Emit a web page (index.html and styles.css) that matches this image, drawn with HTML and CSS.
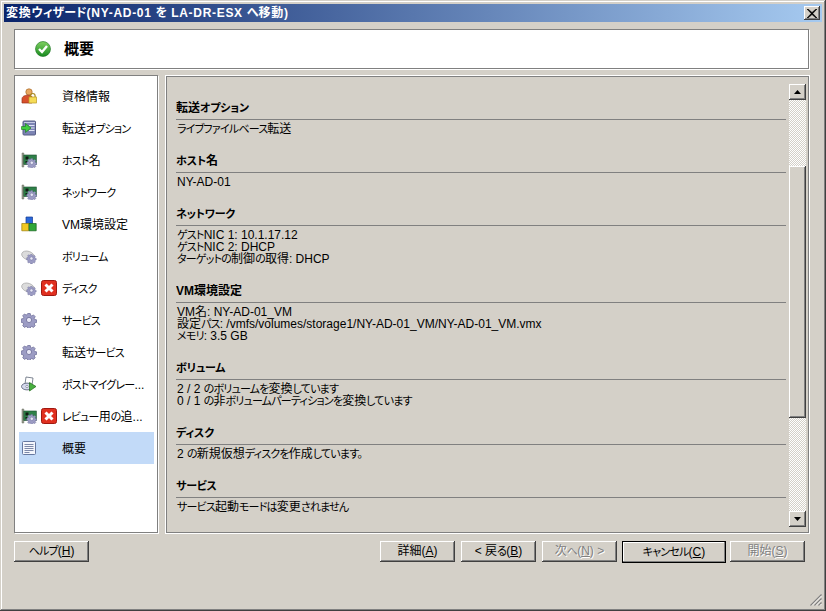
FILE: index.html
```html
<!DOCTYPE html>
<html lang="ja">
<head>
<meta charset="utf-8">
<title>変換ウィザード</title>
<link rel="stylesheet" href="styles.css">
</head>
<body>
<svg class="sprites" width="0" height="0">
  <defs>
    <linearGradient id="gGreen" x1="0" y1="0" x2="0" y2="1"><stop offset="0" stop-color="#7fd060"/><stop offset="1" stop-color="#188a20"/></linearGradient>
    <g id="gear">
      <path fill="#9c9cc4" stroke="#6a6a96" stroke-width=".8" d="M6.600 1h2.800l.4 2 1.300.6 1.800-1.100 1.900 1.900-1.100 1.800.6 1.300 2 .4v2.800l-2 .4-.6 1.300 1.100 1.800-1.900 1.900-1.800-1.100-1.300.6-.4 2H6.600l-.4-2-1.300-.6-1.800 1.100-1.900-1.900 1.100-1.800-.6-1.300-2-.4V6.900l2-.4.6-1.300-1.100-1.800 1.900-1.900 1.800 1.100 1.300-.6z" transform="translate(.6 .6) scale(.92)"/>
      <circle cx="8" cy="8" r="2.600" fill="#e8e8f6" stroke="#6a6a96" stroke-width=".8"/>
    </g>
    <g id="user">
      <circle cx="8" cy="4" r="3.200" fill="#e8a860" stroke="#a86a28" stroke-width=".7"/>
      <path d="M1 15V11c0-2.500 2.500-3.800 6-3.800s4 1 4 3V15z" fill="#d8502c" stroke="#983018" stroke-width=".7"/>
      <path d="M9.500 9V7.800a2.300 2.300 0 0 1 4.600 0V9" fill="none" stroke="#a88820" stroke-width="1.200"/>
      <rect x="8" y="9" width="7.500" height="6" fill="#f6dc58" stroke="#b89820" stroke-width=".7"/>
    </g>
    <g id="transfer">
      <rect x="2" y="1" width="12.500" height="14" rx="1" fill="#7c84b4" stroke="#565c84"/>
      <path d="M3 2.500h11" stroke="#c8cce6"/>
      <path d="M8 5.500h5.500M9.500 8h4M8 10.500h5.500" stroke="#e0e4f4"/>
      <path d="M.5 6.500h4V3.500L10 8l-5.500 4.500V9.500h-4z" fill="#40cc40" stroke="#187818" stroke-width=".6"/>
    </g>
    <g id="nic">
      <path d="M1 1h1.800v14H1z" fill="#9aa090" stroke="#60645a" stroke-width=".5"/>
      <rect x="2.800" y="3" width="12.500" height="9.500" fill="#2e8048" stroke="#1a4c2c" stroke-width=".6"/>
      <path d="M4.500 4.500h3v3h-3zM4.500 9h1.500v2H4.500z" fill="#101c14"/>
      <use href="#gear" transform="translate(5.600 5.600) scale(.65)"/>
    </g>
    <g id="vm">
      <path d="M5 1h6.500v6.500H5z" fill="#2a68d8" stroke="#143a90" stroke-width=".7"/>
      <path d="M.8 7.500h7v7.300h-7z" fill="#f0c820" stroke="#987c10" stroke-width=".7"/>
      <path d="M8 7.500h7.200v7.300H8z" fill="#30a838" stroke="#186020" stroke-width=".7"/>
    </g>
    <g id="volume">
      <ellipse cx="7" cy="7.500" rx="6.500" ry="4.200" fill="#dcdcdc" stroke="#b0b0b0" stroke-width=".8" transform="rotate(18 7 7.500)"/>
      <use href="#gear" transform="translate(5.500 5.500) scale(.62)"/>
    </g>
    <g id="post">
      <path d="M5 1l7 1-1 7-7-1z" fill="#fff" stroke="#606878" stroke-width=".8"/>
      <ellipse cx="6" cy="10.500" rx="5.500" ry="3.400" fill="#d4d8ec" stroke="#505870" stroke-width=".8"/>
      <circle cx="6" cy="10.500" r="1.200" fill="#fff" stroke="#505870" stroke-width=".5"/>
      <path d="M8.500 6.500l6.500 4-6.500 4.500z" fill="#48b040" stroke="#206818" stroke-width=".7"/>
    </g>
    <g id="doc">
      <rect x="1.500" y="1.500" width="13" height="13" rx="1" fill="#f4f6fc" stroke="#6678a0"/>
      <path d="M3.500 4.500h9M3.500 6.500h9M3.500 8.500h9M3.500 10.500h9M3.500 12.500h5" stroke="#7c88a8"/>
    </g>
    <g id="err">
      <rect x=".5" y=".5" width="15" height="15" rx="2" fill="#e03020" stroke="#a01810"/>
      <path d="M4.500 4.500l7 7M11.500 4.500l-7 7" stroke="#fff" stroke-width="3"/>
    </g>
  </defs>
</svg>
<div class="window">
  <div class="titlebar">
    <span class="title">変換<span class="k">ウィザード</span>(NY-AD-01 <span class="k">を</span> LA-DR-ESX <span class="k">へ</span>移動)</span>
    <span class="close"><svg width="10" height="9" viewBox="0 0 10 9"><path d="M1 0l4 3.500L9 0h1L5.800 4.500 10 9H9L5 5.500 1 9H0l4.200-4.500L0 0z" fill="#000" stroke="#000" stroke-width=".6"/></svg></span>
  </div>
  <header class="header">
    <svg class="check" width="16" height="16" viewBox="0 0 16 16"><circle cx="8" cy="8" r="7.500" fill="url(#gGreen)" stroke="#15701c" stroke-width=".6"/><path d="M4 8l3 3 5-6" fill="none" stroke="#fff" stroke-width="2.400"/></svg>
    <h1 class="header-title">概要</h1>
  </header>
  <div class="middle">
    <nav class="nav">
      <div class="nav-row"><svg class="icon" viewBox="0 0 16 16"><use href="#user"/></svg><span class="slot"></span><span class="label">資格情報</span></div>
      <div class="nav-row"><svg class="icon" viewBox="0 0 16 16"><use href="#transfer"/></svg><span class="slot"></span><span class="label">転送<span class="k">オプション</span></span></div>
      <div class="nav-row"><svg class="icon" viewBox="0 0 16 16"><use href="#nic"/></svg><span class="slot"></span><span class="label"><span class="k">ホスト</span>名</span></div>
      <div class="nav-row"><svg class="icon" viewBox="0 0 16 16"><use href="#nic"/></svg><span class="slot"></span><span class="label"><span class="k">ネットワーク</span></span></div>
      <div class="nav-row"><svg class="icon" viewBox="0 0 16 16"><use href="#vm"/></svg><span class="slot"></span><span class="label">VM環境設定</span></div>
      <div class="nav-row"><svg class="icon" viewBox="0 0 16 16"><use href="#volume"/></svg><span class="slot"></span><span class="label"><span class="k">ボリューム</span></span></div>
      <div class="nav-row"><svg class="icon" viewBox="0 0 16 16"><use href="#volume"/></svg><svg class="slot" viewBox="0 0 16 16"><use href="#err"/></svg><span class="label"><span class="k">ディスク</span></span></div>
      <div class="nav-row"><svg class="icon" viewBox="0 0 16 16"><use href="#gear"/></svg><span class="slot"></span><span class="label"><span class="k">サービス</span></span></div>
      <div class="nav-row"><svg class="icon" viewBox="0 0 16 16"><use href="#gear"/></svg><span class="slot"></span><span class="label">転送<span class="k">サービス</span></span></div>
      <div class="nav-row"><svg class="icon" viewBox="0 0 16 16"><use href="#post"/></svg><span class="slot"></span><span class="label"><span class="k">ポストマイグレー</span>...</span></div>
      <div class="nav-row"><svg class="icon" viewBox="0 0 16 16"><use href="#nic"/></svg><svg class="slot" viewBox="0 0 16 16"><use href="#err"/></svg><span class="label"><span class="k">レビュー</span>用<span class="k">の</span>追...</span></div>
      <div class="nav-row selected"><svg class="icon" viewBox="0 0 16 16"><use href="#doc"/></svg><span class="slot"></span><span class="label">概要</span></div>
    </nav>
    <main class="panel">
      <div class="summary">
        <section class="sec"><h2 class="sec-head">転送<span class="k">オプション</span></h2><p class="sec-body"><span class="k">ライブファイルベース</span>転送</p></section>
        <section class="sec"><h2 class="sec-head"><span class="k">ホスト</span>名</h2><p class="sec-body">NY-AD-01</p></section>
        <section class="sec"><h2 class="sec-head"><span class="k">ネットワーク</span></h2><p class="sec-body"><span class="k">ゲスト</span>NIC 1: 10.1.17.12<br><span class="k">ゲスト</span>NIC 2: DHCP<br><span class="k">ターゲットの</span>制御<span class="k">の</span>取得: DHCP</p></section>
        <section class="sec"><h2 class="sec-head">VM環境設定</h2><p class="sec-body">VM名: NY-AD-01_VM<br>設定<span class="k">パス</span>: /vmfs/volumes/storage1/NY-AD-01_VM/NY-AD-01_VM.vmx<br><span class="k">メモリ</span>: 3.5 GB</p></section>
        <section class="sec"><h2 class="sec-head"><span class="k">ボリューム</span></h2><p class="sec-body">2 / 2 <span class="k">のボリュームを</span>変換<span class="k">しています</span><br>0 / 1 <span class="k">の</span>非<span class="k">ボリュームパーティションを</span>変換<span class="k">しています</span></p></section>
        <section class="sec"><h2 class="sec-head"><span class="k">ディスク</span></h2><p class="sec-body">2 <span class="k">の</span>新規仮想<span class="k">ディスクを</span>作成<span class="k">しています。</span></p></section>
        <section class="sec"><h2 class="sec-head"><span class="k">サービス</span></h2><p class="sec-body"><span class="k">サービス</span>起動<span class="k">モードは</span>変更<span class="k">されません</span></p></section>
      </div>
      <div class="scrollbar">
        <span class="sb-btn"><svg width="7" height="4" viewBox="0 0 7 4"><path d="M3.500 0L7 4H0z" fill="#000"/></svg></span>
        <span class="sb-track sb-track-top"></span>
        <span class="sb-thumb"></span>
        <span class="sb-track sb-track-bottom"></span>
        <span class="sb-btn"><svg width="7" height="4" viewBox="0 0 7 4"><path d="M0 0h7L3.500 4z" fill="#000"/></svg></span>
      </div>
    </main>
  </div>
  <footer class="buttons">
    <button class="btn btn-help"><span class="k">ヘルプ</span>(<u>H</u>)</button>
    <button class="btn">詳細(<u>A</u>)</button>
    <button class="btn">&lt; 戻<span class="k">る</span>(<u>B</u>)</button>
    <button class="btn disabled">次<span class="k">へ</span>(<u>N</u>) &gt;</button>
    <button class="btn default"><span class="k">キャンセル</span>(<u>C</u>)</button>
    <button class="btn disabled">開始(<u>S</u>)</button>
  </footer>
  <svg class="grip" width="12" height="12" viewBox="0 0 12 12"><path d="M11.500 .5L.5 11.500M11.500 4.500L4.500 11.500M11.500 8.500L8.500 11.500" stroke="#808080" stroke-width="1.200" fill="none"/><path d="M11.500 2L2 11.500M11.500 6L6 11.500M11.500 10L10 11.500" stroke="#fff" stroke-width=".8" fill="none"/></svg>
</div>
</body>
</html>
```
FILE: styles.css
```css
* { box-sizing: border-box; }
html, body { margin: 0; padding: 0; }
body {
  width: 826px;
  height: 611px;
  overflow: hidden;
  background: #d4d0c8;
  color: #000;
  font-family: "Liberation Sans", "Noto Sans CJK JP", sans-serif;
  font-size: 12px;
  font-feature-settings: "palt";
}
.k {
  font-size: 11px;
  letter-spacing: -.8px;
}
.sprites { position: absolute; }
.window {
  position: relative;
  width: 826px;
  height: 611px;
  padding: 4px 4px 0;
  background: #d4d0c8;
  box-shadow: inset -1px -1px 0 #404040, inset 1px 1px 0 #d4d0c8, inset -2px -2px 0 #808080, inset 2px 2px 0 #fff;
}
.titlebar {
  height: 18px;
  display: flex;
  align-items: center;
  justify-content: space-between;
  padding: 0 2px;
  background: linear-gradient(90deg, #0a246a, #a6caf0);
}
.title {
  color: #fff;
  font-weight: 700;
  font-size: 12px;
  line-height: 18px;
  letter-spacing: .7px;
  white-space: nowrap;
}
.title .k { font-size: 12px; letter-spacing: 0; }
.close {
  width: 16px;
  height: 14px;
  display: flex;
  align-items: center;
  justify-content: center;
  background: #d4d0c8;
  box-shadow: inset -1px -1px 0 #404040, inset 1px 1px 0 #fff, inset -2px -2px 0 #808080;
}
.header {
  height: 40px;
  margin: 7px 13px 0 10px;
  display: flex;
  align-items: center;
  padding-left: 20px;
  background: #fff;
  border: 1px solid #808080;
  box-shadow: 1px 1px 0 #fff;
}
.check { flex: none; }
.header-title {
  margin: 0 0 0 13px;
  font-size: 15px;
  font-weight: 700;
  line-height: 20px;
}
.middle {
  display: flex;
  margin: 6px 12px 0 10px;
  height: 459px;
  gap: 7px;
}
.nav {
  width: 144px;
  height: 458px;
  padding: 4px 3px 0 4px;
  background: #fff;
  border: 1px solid #808080;
  box-shadow: 1px 1px 0 #fff;
}
.nav-row {
  height: 32px;
  display: flex;
  align-items: center;
  padding-left: 2px;
  white-space: nowrap;
}
.nav-row.selected { background: #c2daf8; }
.icon, .slot {
  flex: none;
  width: 16px;
  height: 16px;
}
.icon { margin-right: 4px; }
.slot { margin-right: 5px; }
.label { line-height: 16px; padding-top: 2px; }
.panel {
  flex: 1;
  display: flex;
  position: relative;
  border: 1px solid #fff;
  outline: 1px solid #808080;
  outline-offset: -2px;
  padding: 8px 3px 6px 10px;
  background: #d4d0c8;
}
.summary {
  flex: 1;
  min-width: 0;
  padding-top: 12px;
  margin-right: 3px;
  overflow: hidden;
}
.sec { padding-bottom: 14px; }
.sec-head {
  margin: 0;
  height: 24px;
  padding: 4px 0 0;
  font-size: 12px;
  font-weight: 700;
  line-height: 16px;
  border-bottom: 1px solid #808080;
}
.sec-head .k { font-size: 11px; letter-spacing: -.2px; }
.sec-body {
  margin: 0;
  padding: 3px 0 0 1px;
  line-height: 12px;
  white-space: nowrap;
}
.scrollbar {
  width: 17px;
  display: flex;
  flex-direction: column;
}
.sb-btn {
  flex: none;
  height: 16px;
  display: flex;
  align-items: center;
  justify-content: center;
  background: #d4d0c8;
  box-shadow: inset -1px -1px 0 #404040, inset 1px 1px 0 #fff, inset -2px -2px 0 #808080;
}
.sb-track { background: repeating-conic-gradient(#fff 0 25%, #d4d0c8 0 50%) 0 0 / 2px 2px; }
.sb-track-top { height: 66px; }
.sb-track-bottom { height: 93px; }
.sb-thumb {
  height: 253px;
  background: #d4d0c8;
  box-shadow: inset -1px -1px 0 #404040, inset 1px 1px 0 #fff, inset -2px -2px 0 #808080;
}
.buttons {
  display: flex;
  margin: 7px 17px 0 10px;
  align-items: flex-start;
}
.btn {
  width: 75px;
  height: 21px;
  margin: 0 6px 0 0;
  padding: 0;
  border: 0;
  background: #d4d0c8;
  color: #000;
  font-family: inherit;
  font-feature-settings: inherit;
  font-size: 12px;
  line-height: 19px;
  box-shadow: inset -1px -1px 0 #404040, inset 1px 1px 0 #fff, inset -2px -2px 0 #808080;
}
.btn u { text-underline-offset: 1px; }
.btn-help { margin-right: auto; }
.btn.disabled {
  color: #808080;
  text-shadow: 1px 1px 0 #fff;
}
.btn.disabled:nth-child(4) { margin-right: 5px; }
.btn.default {
  width: 104px;
  height: 22px;
  margin-right: 4px;
  box-shadow: inset 0 0 0 1px #000, inset -2px -2px 0 #808080, inset 2px 2px 0 #fff;
}
.btn:last-child { margin-right: 0; }
.grip {
  position: absolute;
  right: 4px;
  bottom: 5px;
}
```
